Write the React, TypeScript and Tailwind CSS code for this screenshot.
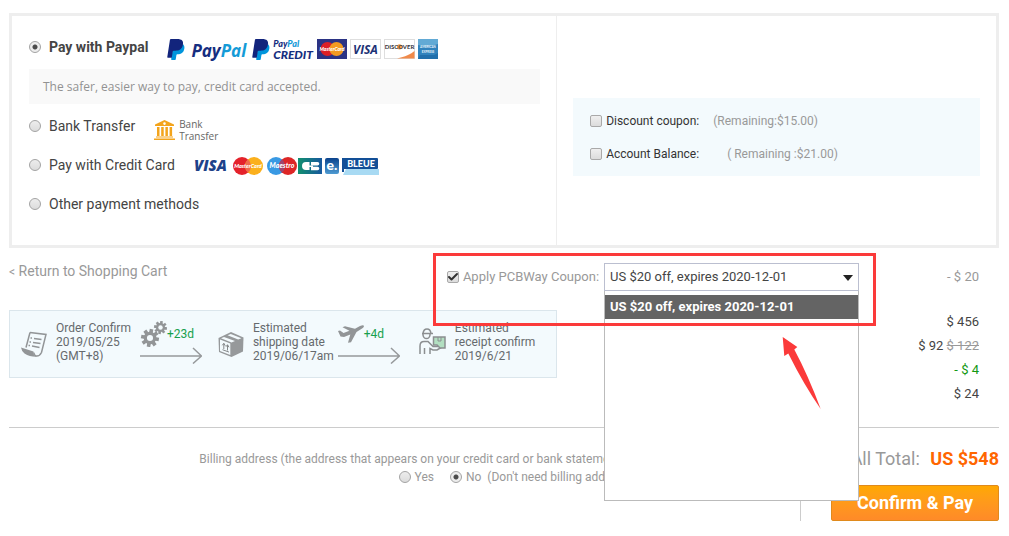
import React, { useState } from 'react';
import { Check } from 'lucide-react';
import { clsx } from 'clsx';

type Method = 'paypal' | 'bank' | 'card' | 'other';

const radioClass =
  'size-3 shrink-0 appearance-none rounded-full border border-[#a3a3a3] bg-[linear-gradient(#ededed,#dcdcdc)] checked:bg-[radial-gradient(circle,#4b4b4b_0_2px,#ededed_3px)]';

const logoFont = 'Lato, sans-serif';

const PayPalMark = () => (
  <svg width="18" height="21" viewBox="1.5 0 21 24" preserveAspectRatio="none" aria-hidden="true">
    <path fill="#0095dc" d="M21.222 6.917a3.35 3.35 0 0 0-.607-.541L8 12 6.5 22l-.1 1.353a.56.56 0 0 0 .554.647h3.882c.46 0 .85-.334.922-.788.06-.26.76-4.852.816-5.09a.932.932 0 0 1 .923-.788h.58c3.76 0 6.705-1.528 7.565-5.946.36-1.847.174-3.388-.777-4.471z" />
    <path fill="#12247c" d="M7.076 21.337H2.47a.641.641 0 0 1-.633-.74L4.944.901C5.026.382 5.474 0 5.998 0h7.46c2.57 0 4.578.543 5.69 1.81 1.01 1.15 1.304 2.42 1.012 4.287-.023.143-.047.288-.077.437-.983 5.05-4.349 6.797-8.647 6.797h-2.19c-.524 0-.968.382-1.05.9l-1.12 7.106z" />
  </svg>
);

const PaypalLogos = () => (
  <div className="flex items-center pt-1">
    <PayPalMark />
    <span className="ml-1.5 pt-1 font-['Open_Sans'] text-[17px] leading-4 font-bold text-[#152e80] italic">
      Pay<span className="text-[#149bd7]">Pal</span>
    </span>
    <span className="ml-1.5 flex">
      <PayPalMark />
    </span>
    <span className="ml-[3px] flex flex-col font-['Lato'] font-black text-[#152e80] italic">
      <span className="text-[9px] leading-[11px]">
        Pay<span className="text-[#149bd7]">Pal</span>
      </span>
      <span className="text-[12px] leading-[12px]">CREDIT</span>
    </span>
    <svg className="ml-1" width="30" height="20" viewBox="0 0 30 20" aria-label="MasterCard">
      <rect width="30" height="20" fill="#2b3384" />
      <circle cx="10.5" cy="10" r="7" fill="#dc1f26" />
      <circle cx="19.5" cy="10" r="7" fill="#f39a20" />
      <text x="15" y="12" textAnchor="middle" fontFamily={logoFont} fontSize="5" fontWeight="900" fontStyle="italic" fill="#fff">MasterCard</text>
    </svg>
    <svg className="ml-[3px]" width="31" height="20" viewBox="0 0 31 20" aria-label="Visa">
      <rect x=".5" y=".5" width="30" height="19" fill="#fff" stroke="#dedede" />
      <text x="15.5" y="15" textAnchor="middle" fontFamily="Open Sans, sans-serif" fontSize="12" fontWeight="700" fontStyle="italic" fill="#1c3276">VISA</text>
    </svg>
    <svg className="ml-[3px]" width="31" height="20" viewBox="0 0 31 20" aria-label="Discover">
      <rect x=".5" y=".5" width="30" height="19" fill="#fff" stroke="#dedede" />
      <path d="M13 19.500C21 18 27 15 30.500 12V19.500Z" fill="#f08a4a" />
      <circle cx="15.500" cy="7.800" r="2.600" fill="#f5a04c" />
      <text x="15.500" y="10" textAnchor="middle" fontFamily={logoFont} fontSize="6" fontWeight="700" fill="#33333a">DISCOVER</text>
    </svg>
    <svg className="ml-[3px]" width="20" height="20" viewBox="0 0 20 20" aria-label="American Express">
      <rect width="20" height="20" fill="#3183bd" />
      <path d="M0 0H20V5L10 8 0 6Z" fill="#62aad5" />
      <path d="M2 16h14l4-2v6H0Z" fill="#216fab" />
      <text x="10" y="9" textAnchor="middle" fontFamily={logoFont} fontSize="3" fontWeight="700" fill="#e6f3fa">AMERICAN</text>
      <text x="10" y="13.500" textAnchor="middle" fontFamily={logoFont} fontSize="3" fontWeight="700" fill="#e6f3fa">EXPRESS</text>
    </svg>
  </div>
);

const BankLogo = () => (
  <div className="flex items-center gap-1 pt-2">
    <svg width="21" height="20" viewBox="0 0 21 20" fill="#f3a41c" aria-hidden="true">
      <path fillRule="evenodd" d="M10.500 0 20 4.500V6H1V4.500ZM10.500 2.300a1.300 1.300 0 1 0 0 2.600 1.300 1.300 0 0 0 0-2.600Z" />
      <path d="M3 7h2.500v9H3zM7.200 7h2.500v9H7.200zM11.400 7h2.500v9h-2.500zM15.600 7h2.500v9h-2.500zM2 16.500h17v1H2zM0 18.400h21V20H0z" />
    </svg>
    <span className="flex flex-col font-['Open_Sans'] text-[10px] leading-3 text-[#666]">
      <span>Bank</span>
      <span>Transfer</span>
    </span>
  </div>
);

const CardLogos = () => (
  <svg className="mt-0.5" width="186" height="20" viewBox="0 0 186 20" aria-label="Visa, MasterCard, Maestro, CB, e-Carte Bleue">
    <defs>
      <linearGradient id="cb">
        <stop offset="0" stopColor="#12906f" />
        <stop offset="1" stopColor="#17579e" />
      </linearGradient>
      <linearGradient id="bleue" x2="0" y2="1">
        <stop offset="0" stopColor="#0b438c" />
        <stop offset="1" stopColor="#4e9bd2" />
      </linearGradient>
    </defs>
    <text x="0" y="15" fontFamily="Open Sans, sans-serif" fontWeight="800" fontSize="15" fontStyle="italic" fill="#1d4289">VISA</text>
    <g fontFamily={logoFont} fontWeight="900">
      <circle cx="48" cy="10" r="9" fill="#e4222b" />
      <circle cx="60" cy="10" r="9" fill="#fbb01d" />
      <path d="M54 3.300a9 9 0 0 1 0 13.400 9 9 0 0 1 0-13.400Z" fill="#ef6b4d" />
      <text x="54" y="12" textAnchor="middle" fontSize="5.500" fontStyle="italic" fill="#fff">MasterCard</text>
      <circle cx="82" cy="10" r="9" fill="#3999e3" />
      <circle cx="94" cy="10" r="9" fill="#dd2626" />
      <path d="M88 3.300a9 9 0 0 1 0 13.400 9 9 0 0 1 0-13.400Z" fill="#9d466f" />
      <text x="88" y="12" textAnchor="middle" fontSize="7" fontStyle="italic" fill="#fff">Maestro</text>
    </g>
    <rect x="104" y="2" width="24" height="16" fill="url(#cb)" />
    <path d="M112 6h3.500v3.500H119v1.500h-3.500v3H112a4 4 0 0 1 0-8Z" fill="#fff" />
    <path d="M117 6h6.500a1.800 1.800 0 0 1 0 3.600H117zM117 10.700h6.500a1.800 1.800 0 0 1 0 3.600H117z" fill="#fff" />
    <rect x="131" y="2" width="14" height="16" rx="2" fill="url(#bleue)" />
    <text x="132.500" y="14" fontFamily={logoFont} fontWeight="900" fontSize="14" fill="#fff">e.</text>
    <path d="M152 13h33v6h-36z" fill="#a8daf3" />
    <rect x="148" y="2" width="36" height="11" rx="1" fill="#124f97" />
    <path d="M148 2h2v14h-2z" fill="#124f97" />
    <text x="167" y="11" textAnchor="middle" fontFamily={logoFont} fontWeight="900" fontSize="9" fill="#fff">BLEUE</text>
  </svg>
);

const ScrollIcon = () => (
  <svg className="mt-2.5 shrink-0" width="26" height="27" viewBox="0 0 26 27" fill="none" stroke="#929597" aria-hidden="true">
    <path d="M9 1.500 25 3.500 20.500 21.500Q18.500 25.500 15 25 12.500 24 13 21.500" strokeWidth="1.500" />
    <path d="M9 1.500 5 16.500" strokeWidth="1.500" />
    <path d="M0 16.500 12.500 20.500Q12 25 16 25.700Q9 26 3.500 22.500Q.5 20 0 16.500Z" fill="#929597" stroke="none" />
    <path d="M9.500 7h1.500M8.500 11h1.500M7.500 14.500h1.500M13 7.500l7.500 1M12 11.500l7.500 1M11 15l7.500 1.500" strokeWidth="1.500" />
  </svg>
);

const PackageIcon = () => (
  <svg className="mt-2.5 shrink-0" width="26" height="27" viewBox="0 0 26 27" aria-hidden="true">
    <path d="M13 1 25.500 6.500 25 20.500 13.500 26 1 21 .500 7Z" fill="#96999b" />
    <path d="M2 8.600 12.300 12.600V24L2 20Z" fill="#f3fafd" />
    <path d="M3 7.200 6 5.900 17 10.100 13.500 11.500ZM9.500 4.300 12.800 2.900 23.400 7.200 20.200 8.600Z" fill="#f3fafd" />
    <path d="M5.800 18V12.500M4.300 14.300l1.500-2 1.500 2.500M9.500 19.500V14M8 15.700l1.500-2 1.500 2.600M4.500 18.700l6.500 2.400" stroke="#85888a" fill="none" />
  </svg>
);

const CourierIcon = () => (
  <svg className="mt-[7px] shrink-0" width="27" height="27" viewBox="0 0 27 27" fill="none" stroke="#8b8e90" strokeWidth="1.500" aria-hidden="true">
    <path d="M3 5.500h11M4 5.500Q4.500 1 8 1t4 4.500M4 5.500V7Q4.500 10.500 7.500 10.500T11 7V5.500" />
    <path d="M1 26V18Q1 13.500 5 13.500H9L14 18.500H19" />
    <path d="M5.500 26v-6M11 26v-5.500l3 1.500h4l5-3" />
    <path d="M14.500 9H26v11h-5l-3-3h-3.500Z" fill="#b2dfc1" />
    <path d="M19 9v4h3V9" strokeWidth="1" />
  </svg>
);

function Gear({ x, y, r }: { x: number; y: number; r: number }) {
  return (
    <g transform={`translate(${x} ${y}) scale(${r / 10})`}>
      {[0, 45, 90, 135].map((a) => (
        <rect key={a} x="-2" y="-10" width="4" height="20" transform={`rotate(${a + 10})`} fill="#929597" />
      ))}
      <circle r="7" fill="#929597" />
      <circle r="3.400" fill="#f3fafd" />
    </g>
  );
}

const GearsIcon = () => (
  <svg width="27" height="26" viewBox="0 0 27 26" aria-hidden="true">
    <Gear x={10} y={17} r={9} />
    <Gear x={20.5} y={6.5} r={6.5} />
  </svg>
);

const PlaneIcon = () => (
  <svg width="26" height="18" viewBox="0 0 26 18" fill="#929597" aria-hidden="true">
    <path d="M0 6 2 5.500 5.500 8 11.500 5.800 4.500 2.200 7 1.300 17 3.700 22 1Q25.500-.3 26 1 26 2.500 22.500 4.500L18.500 7 13 17.200 10 17.800 12.300 9.600 6 12 2.500 11.500Z" />
  </svg>
);

function Step({ icon, lines }: { icon: React.ReactNode; lines: string[] }) {
  return (
    <div className="flex gap-[9px]">
      {icon}
      <p className="text-xs leading-[14px] whitespace-nowrap text-[#666a6d]">
        {lines.map((line) => (
          <span key={line} className="block">{line}</span>
        ))}
      </p>
    </div>
  );
}

function Leg({ icon, days, className }: { icon: React.ReactNode; days: string; className: string }) {
  return (
    <div className={clsx('flex flex-col', className)}>
      <div className="flex h-[26px] items-center text-xs text-[#17a04d]">
        {icon}
        <span>{days}</span>
      </div>
      <svg width="62" height="17" viewBox="0 0 62 17" fill="none" stroke="#96999b" strokeWidth="1.500" aria-hidden="true">
        <path d="M0 9H61M53 1l8.500 8-8.500 7.500" />
      </svg>
    </div>
  );
}

interface MethodRowProps {
  id: Method;
  label: string;
  method: Method;
  onChange: (m: Method) => void;
  children?: React.ReactNode;
}

function MethodRow({ id, label, method, onChange, children }: MethodRowProps) {
  return (
    <div className="flex h-6 items-center gap-[19px]">
      <label className={clsx('flex items-center gap-2 text-sm whitespace-nowrap text-[#444]', id === 'paypal' && 'font-bold')}>
        <input type="radio" name="method" className={radioClass} checked={method === id} onChange={() => onChange(id)} />
        {label}
      </label>
      {children}
    </div>
  );
}

function Tick({ label, className, defaultChecked }: { label: string; className: string; defaultChecked?: boolean }) {
  return (
    <label className={clsx('flex items-center gap-1 whitespace-nowrap', className)}>
      <span className="relative flex">
        <input
          type="checkbox"
          defaultChecked={defaultChecked}
          className="peer size-3 appearance-none rounded-xs border border-[#a9a9a9] bg-[linear-gradient(#efefef,#dcdcdc)]"
        />
        <Check className="pointer-events-none absolute inset-0 hidden size-3 text-[#333] peer-checked:block" strokeWidth={4} />
      </span>
      {label}
    </label>
  );
}

export default function App() {
  const [method, setMethod] = useState<Method>('paypal');
  const [billing, setBilling] = useState('no');
  const coupon = 'US $20 off, expires 2020-12-01';

  return (
    <main className="bg-white pt-[13px] pr-2.5 pb-4 pl-[9px] font-['Roboto',sans-serif] text-[13px] text-[#444]">
      {/* Payment methods */}
      <section className="flex border-[3px] border-[#eee]">
        <div className="basis-[55.4%] border-r border-[#eee] pt-[19px] pr-4 pb-[29px] pl-[17px]">
          <MethodRow id="paypal" label="Pay with Paypal" method={method} onChange={setMethod}>
            <PaypalLogos />
          </MethodRow>
          <p className="my-2.5 bg-[#f9f9f9] px-3.5 font-['Open_Sans',sans-serif] text-xs leading-[35px] text-[#929292]">
            The safer, easier way to pay, credit card accepted.
          </p>
          <div className="flex flex-col gap-[15px]">
            <MethodRow id="bank" label="Bank Transfer" method={method} onChange={setMethod}>
              <BankLogo />
            </MethodRow>
            <MethodRow id="card" label="Pay with Credit Card" method={method} onChange={setMethod}>
              <CardLogos />
            </MethodRow>
            <MethodRow id="other" label="Other payment methods" method={method} onChange={setMethod} />
          </div>
        </div>

        <div className="flex-1 px-4 pt-[82px]">
          <div className="flex flex-col gap-[9px] bg-[#f3fafd] px-[17px] pt-[11px] pb-2.5 text-xs">
            <div className="flex h-6 items-center gap-3.5">
              <Tick label="Discount coupon:" className="text-[#333]" />
              <span className="text-[#999]">(Remaining:$15.00)</span>
            </div>
            <div className="flex h-6 items-center gap-7">
              <Tick label="Account Balance:" className="text-[#333]" />
              <span className="text-[#999]">( Remaining :$21.00)</span>
            </div>
          </div>
        </div>
      </section>

      {/* Coupon */}
      <section className="flex items-start pt-[15px] pr-5">
        <a href="#cart" className="text-sm leading-4 text-[#999]">
          <span className="text-xs">&lt;</span> Return to Shopping Cart
        </a>
        <div className="relative z-10 mr-[88px] ml-auto flex h-7 items-center gap-[5px]">
          <Tick label="Apply PCBWay Coupon:" className="text-[#999]" defaultChecked />
          <div className="relative">
            <select
              aria-label="Coupon"
              className="block h-7 w-[255px] appearance-none border border-[#bbbfd0] bg-white px-[5px] text-[13px] text-[#444]"
            >
              <option>{coupon}</option>
            </select>
            <svg className="pointer-events-none absolute top-3 right-1.5" width="10" height="6" viewBox="0 0 10 6" fill="#222" aria-hidden="true">
              <path d="M0 0h10L5 6z" />
            </svg>
            <ul role="listbox" className="absolute inset-x-0 top-full h-[210px] border border-t-0 border-[#bbb] bg-white pt-1">
              <li role="option" aria-selected="true" className="bg-[#646464] px-[5px] leading-6 font-bold text-white">
                {coupon}
              </li>
            </ul>
          </div>
          <div className="pointer-events-none absolute -top-2.5 -right-[17px] -bottom-[35px] -left-3.5 border-[3px] border-[#fb3a3a]" />
          <svg className="pointer-events-none absolute top-[74px] right-[38px]" width="39" height="73" viewBox="0 0 39 73" fill="#fb3a3a" aria-hidden="true">
            <path d="M.700 0 15.300 10 12.300 12.500Q26 38 38.700 72Q22 48 6.300 16.500L2.300 19Z" />
          </svg>
        </div>
        <span className="leading-7 text-[#999]">- $ 20</span>
      </section>

      {/* Schedule and amounts */}
      <section className="mt-[19px] flex items-start justify-between pr-5">
        <div className="flex h-17 w-[548px] border border-[#dbe6ec] bg-[#f3fafd] pt-2.5 pl-[11px]">
          <Step icon={<ScrollIcon />} lines={['Order Confirm', '2019/05/25', '(GMT+8)']} />
          <Leg icon={<GearsIcon />} days="+23d" className="mr-4 ml-[9px]" />
          <Step icon={<PackageIcon />} lines={['Estimated', 'shipping date', '2019/06/17am']} />
          <Leg icon={<PlaneIcon />} days="+4d" className="mr-[19px] ml-1" />
          <Step icon={<CourierIcon />} lines={['Estimated', 'receipt confirm', '2019/6/21']} />
        </div>
        <ul className="text-right leading-6">
          <li>$ 456</li>
          <li>
            $ 92 <del className="text-[#999]">$ 122</del>
          </li>
          <li className="text-[#129812]">- $ 4</li>
          <li>$ 24</li>
        </ul>
      </section>

      {/* Billing and total */}
      <section className="mt-[21px] flex justify-between border-t border-[#ccc] text-xs text-[#999]">
        <fieldset className="flex flex-1 flex-col items-end pt-[22px] pr-42 leading-[18px]">
          <legend className="sr-only">Billing address</legend>
          <p className="pr-2">Billing address (the address that appears on your credit card or bank statement)</p>
          <div className="flex gap-4">
            <label className="flex items-center gap-1">
              <input type="radio" name="billing" className={radioClass} checked={billing === 'yes'} onChange={() => setBilling('yes')} />
              Yes
            </label>
            <label className="flex items-center gap-1">
              <input type="radio" name="billing" className={radioClass} checked={billing === 'no'} onChange={() => setBilling('no')} />
              <span>No&nbsp; (Don't need billing address)</span>
            </label>
          </div>
        </fieldset>
        <div className="flex w-[199px] flex-col items-end border-l border-[#ccc] pt-[17px]">
          <p className="text-lg leading-7">
            All Total: <strong className="ml-1.5 font-bold text-[#f60]">US $548</strong>
          </p>
          <button
            type="button"
            className="mt-3 h-9 w-42 rounded-xs border border-[#e08a1c] bg-linear-to-b from-[#ffa800] to-[#ff8a28] text-lg font-bold text-white"
          >
            Confirm &amp; Pay
          </button>
        </div>
      </section>
    </main>
  );
}
